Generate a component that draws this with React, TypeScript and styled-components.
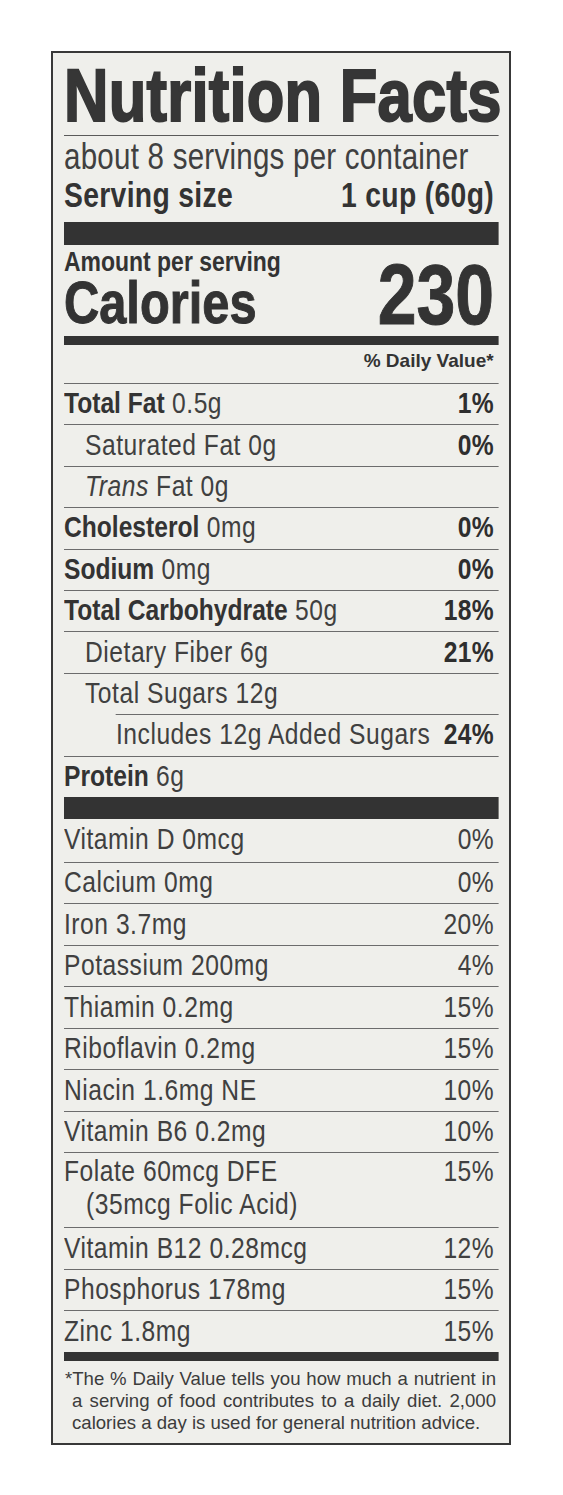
import styled, { createGlobalStyle } from 'styled-components';

// No condensed face is installed, so the label body is set in Liberation Sans
// and squeezed horizontally to the width of a narrow grotesque.
const SQUEEZE = 0.82;
const u = (px: number) => +(px / SQUEEZE).toFixed(2);

const GlobalStyle = createGlobalStyle`
  html, body {
    margin: 0;
    padding: 0;
    background: #ffffff;
  }
  body {
    font-family: 'Liberation Sans', Arial, sans-serif;
    color: #3a3a3a;
  }
`;

const sans = `'Liberation Sans', Arial, sans-serif`;

const Page = styled.div`
  box-sizing: border-box;
  width: 563px;
  height: 1495px;
  padding: 51px 0 0 51px;
`;

const Label = styled.section`
  box-sizing: border-box;
  width: 460px;
  border: 2px solid #383838;
  background: #efefeb;
  padding: 0 10px 0 11px;
  overflow: hidden;
`;

const Squeeze = styled.div`
  width: ${u(435)}px;
  transform: scaleX(${SQUEEZE});
  transform-origin: 0 0;
`;

const Title = styled.h1`
  margin: 0;
  padding-top: 2px;
  font: 700 75px/80px ${sans};
  letter-spacing: 0.3px;
  color: #363636;
  -webkit-text-stroke: 2px #363636;
  white-space: nowrap;
  border-bottom: 1px solid #5a5a5a;
`;

const ServingsPer = styled.div`
  padding-top: 3px;
  font: 400 36px/36px ${sans};
  letter-spacing: 0.3px;
  color: #404040;
  white-space: nowrap;
`;

const ServingSize = styled.div`
  display: flex;
  justify-content: space-between;
  padding-right: ${u(5)}px;
  font: 700 34.5px/40px ${sans};
  letter-spacing: 0.4px;
  color: #333;
  white-space: nowrap;
`;

const Bar = styled.div<{ $h: number; $gap?: number }>`
  height: ${(p) => p.$h}px;
  margin-top: ${(p) => p.$gap ?? 0}px;
  background: #333;
`;

const CalorieBlock = styled.div`
  display: flex;
  justify-content: space-between;
  align-items: flex-end;
  padding: 4px ${u(5)}px 0 0;
  color: #333;
  white-space: nowrap;
`;

const Amount = styled.div`
  font: 700 28px/26px ${sans};
`;

const Calories = styled.div`
  font: 700 59.5px/56px ${sans};
  -webkit-text-stroke: 1px #333;
`;

const CalorieCount = styled.div`
  font: 700 85px/73px ${sans};
  -webkit-text-stroke: 1px #333;
`;

const DailyHeader = styled.div`
  box-sizing: border-box;
  height: 38px;
  padding-right: ${u(5)}px;
  text-align: right;
  font: 700 19px/31px ${sans};
  color: #333;
`;

const Unsqueeze = styled.span`
  display: inline-block;
  transform: scaleX(${+(1 / SQUEEZE).toFixed(4)});
  transform-origin: right center;
`;

const Row = styled.div<{ $indent?: number; $offset?: number; $h?: number; $top?: boolean }>`
  box-sizing: border-box;
  display: grid;
  grid-template-columns: minmax(0, 1fr) auto;
  align-items: center;
  height: ${(p) => p.$h ?? 41.5}px;
  margin-left: ${(p) => u(p.$offset ?? 0)}px;
  padding: 0 ${u(5)}px 2px ${(p) => u(p.$indent ?? 0)}px;
  border-top: ${(p) => (p.$top === false ? 'none' : '1px solid #6c6c6c')};
  font: 400 30px/30px ${sans};
  letter-spacing: 0.65px;
  color: #404040;
  white-space: nowrap;
`;

const Name = styled.span``;

const Strong = styled.b`
  font-weight: 700;
  letter-spacing: 0;
  color: #333;
`;

const Italic = styled.i`
  font-style: italic;
`;

const Percent = styled.span<{ $bold?: boolean }>`
  font-weight: ${(p) => (p.$bold ? 700 : 400)};
  letter-spacing: ${(p) => (p.$bold ? 0.4 : 0.5)}px;
  color: ${(p) => (p.$bold ? '#2e2e2e' : '#404040')};
`;

const TwoLineRow = styled.div`
  box-sizing: border-box;
  display: flex;
  justify-content: space-between;
  align-items: flex-start;
  height: 75px;
  padding: 1px ${u(5)}px 0 0;
  border-top: 1px solid #6c6c6c;
  font: 400 30px/33px ${sans};
  letter-spacing: 0.65px;
  color: #404040;
  white-space: nowrap;
`;

const SubLine = styled.div`
  padding-left: ${u(22)}px;
`;

const Footnote = styled.div`
  padding: 7px 3px 9px 1px;
  font: 400 18.6px/22px ${sans};
  color: #3c3c3c;
`;

const FootLine = styled.span<{ $hang?: boolean; $last?: boolean }>`
  display: block;
  padding-left: ${(p) => (p.$hang ? 7 : 0)}px;
  text-align: justify;
  text-align-last: ${(p) => (p.$last ? 'left' : 'justify')};
`;

type Nutrient = {
  bold?: string;
  italic?: string;
  text: string;
  dv?: string;
  indent?: number;
  offset?: number;
};

const macros: Nutrient[] = [
  { bold: 'Total Fat', text: ' 0.5g', dv: '1%' },
  { text: 'Saturated Fat 0g', dv: '0%', indent: 21 },
  { italic: 'Trans', text: ' Fat 0g', indent: 21 },
  { bold: 'Cholesterol', text: ' 0mg', dv: '0%' },
  { bold: 'Sodium', text: ' 0mg', dv: '0%' },
  { bold: 'Total Carbohydrate', text: ' 50g', dv: '18%' },
  { text: 'Dietary Fiber 6g', dv: '21%', indent: 21 },
  { text: 'Total Sugars 12g', indent: 21 },
  { text: 'Includes 12g Added Sugars', dv: '24%', offset: 52 },
  { bold: 'Protein', text: ' 6g' },
];

const vitaminsTop: [string, string][] = [
  ['Vitamin D 0mcg', '0%'],
  ['Calcium 0mg', '0%'],
  ['Iron 3.7mg', '20%'],
  ['Potassium 200mg', '4%'],
  ['Thiamin 0.2mg', '15%'],
  ['Riboflavin 0.2mg', '15%'],
  ['Niacin 1.6mg NE', '10%'],
  ['Vitamin B6 0.2mg', '10%'],
];

const vitaminsBottom: [string, string][] = [
  ['Vitamin B12 0.28mcg', '12%'],
  ['Phosphorus 178mg', '15%'],
  ['Zinc 1.8mg', '15%'],
];

export default function App() {
  return (
    <Page>
      <GlobalStyle />
      <Label>
        <Squeeze>
          <Title>Nutrition Facts</Title>
          <ServingsPer>about 8 servings per container</ServingsPer>
          <ServingSize>
            <span>Serving size</span>
            <span>1 cup (60g)</span>
          </ServingSize>
          <Bar $h={23} $gap={7} />
          <CalorieBlock>
            <div>
              <Amount>Amount per serving</Amount>
              <Calories>Calories</Calories>
            </div>
            <CalorieCount>230</CalorieCount>
          </CalorieBlock>
          <Bar $h={9} $gap={5} />
          <DailyHeader>
            <Unsqueeze>% Daily Value*</Unsqueeze>
          </DailyHeader>
          {macros.map((n, i) => (
            <Row key={i} $indent={n.indent} $offset={n.offset} $h={41.4}>
              <Name>
                {n.bold && <Strong>{n.bold}</Strong>}
                {n.italic && <Italic>{n.italic}</Italic>}
                {n.text}
              </Name>
              {n.dv && <Percent $bold>{n.dv}</Percent>}
            </Row>
          ))}
          <Bar $h={22} />
          {vitaminsTop.map(([name, dv], i) => (
            <Row key={name} $top={i !== 0} $h={i === 0 ? 43 : 41.5}>
              <Name>{name}</Name>
              <Percent>{dv}</Percent>
            </Row>
          ))}
          <TwoLineRow>
            <div>
              <div>Folate 60mcg DFE</div>
              <SubLine>(35mcg Folic Acid)</SubLine>
            </div>
            <Percent>15%</Percent>
          </TwoLineRow>
          {vitaminsBottom.map(([name, dv]) => (
            <Row key={name}>
              <Name>{name}</Name>
              <Percent>{dv}</Percent>
            </Row>
          ))}
          <Bar $h={9} />
        </Squeeze>
        <Footnote>
          <FootLine>*The % Daily Value tells you how much a nutrient in</FootLine>
          <FootLine $hang>a serving of food contributes to a daily diet. 2,000</FootLine>
          <FootLine $hang $last>calories a day is used for general nutrition advice.</FootLine>
        </Footnote>
      </Label>
    </Page>
  );
}
